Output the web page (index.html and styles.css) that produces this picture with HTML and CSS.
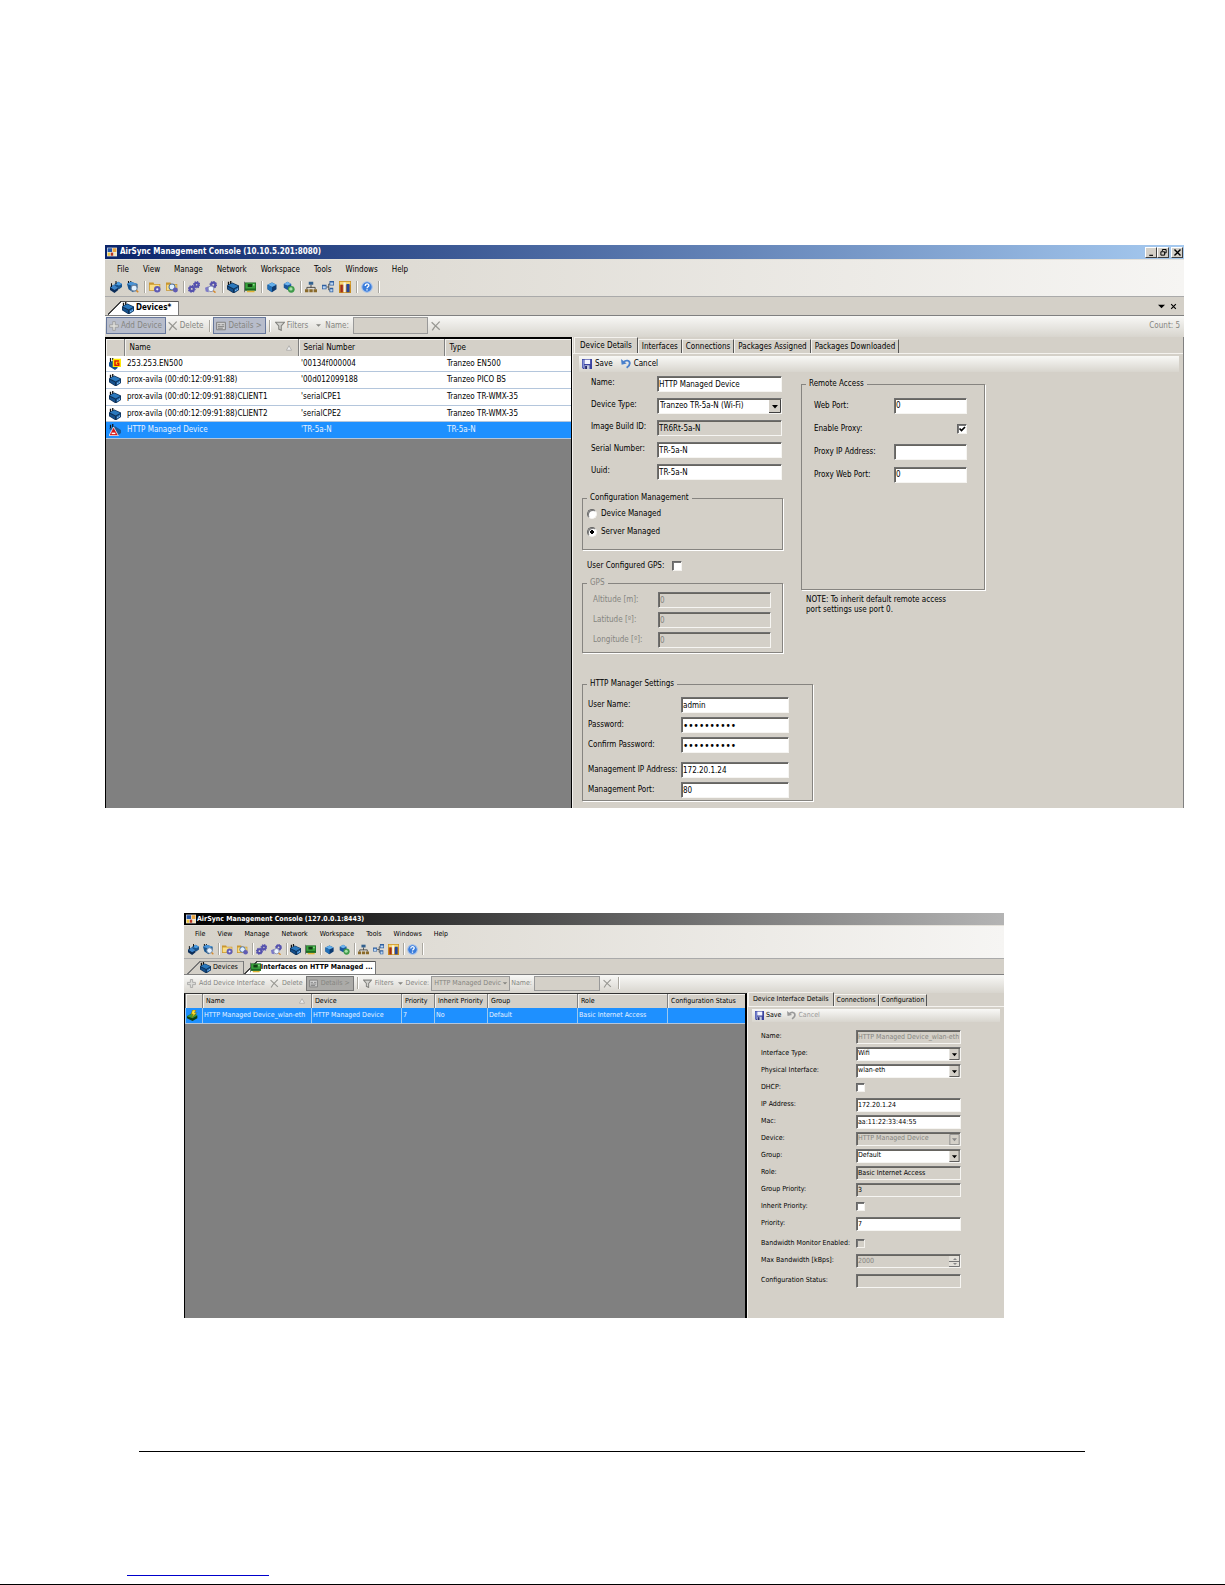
FILE: index.html
```
<!DOCTYPE html>
<html lang="en">
<head>
    <meta charset="utf-8">
    <title>AirSync Management Console</title>
    <link rel="stylesheet" href="styles.css">
</head>
<body>
    <!-- Icon set -->
    <svg class="sprite" aria-hidden="true">
        <symbol id="i-app" viewBox="0 0 16 16"><path fill="#e8e8e8" d="M0 1h16v14H0z"/><path fill="#2456a8" d="M1 2h7v6H1z"/><path fill="#e9a33c" d="M9 2h6v6H9z"/><path fill="#f1c93f" d="M1 9h4v5H1z"/><path fill="#b8341f" d="M6 9h4v5H6z"/><path fill="#f7e7b0" d="M11 9h4v5h-4z"/></symbol>
        <symbol id="i-device" viewBox="0 0 16 16"><path stroke="#111" stroke-width="1.800" d="M2 1v6M5 0v5"/><path fill="#0e3056" d="M0 6l7-4 9 4v6l-6 4H8l-8-5z"/><path fill="#2a78bd" d="M1 6l6-3 8 3.500-6 3.500z"/><path fill="#15508c" d="M1 7.500L8 11v4l-7-4.500z"/><path fill="#1e66aa" d="M10 11l5-3v4l-5 3z"/><path fill="#a6d4ff" d="M11 12l1.500-1v1.500L11 13.500zM13.300 10.500l1.200-.8v1.500l-1.200.8z"/></symbol>
        <symbol id="i-devices" viewBox="0 0 16 16"><path fill="#17548f" d="M6 4l5-3 5 3v4l-4 3-6-3z"/><path fill="#4a9be0" d="M6 4l5-3 5 3-4 2z"/><path fill="#0c2d58" d="M0 8l5-3 6 4v3l-5 4-6-4z"/><path fill="#3b83c8" d="M0 8l5-3 6 4-5 3z"/><path stroke="#111" stroke-width="1.400" d="M2 3v5M8 0v4"/></symbol>
        <symbol id="i-finddev" viewBox="0 0 16 16"><path stroke="#111" stroke-width="1.500" d="M2 0v4M5 0v3"/><path fill="#17548f" d="M0 4l5-3 9 3v5l-6 6-6-4z"/><path fill="#4a94d8" d="M0 4l5-3 9 3-6 3z"/><circle cx="9.500" cy="9.500" r="4" fill="#e4f2ff" stroke="#6d84a0" stroke-width="1.400"/><path stroke="#d58a2e" stroke-width="2" d="M12.500 12.500L15 15"/></symbol>
        <symbol id="i-folder" viewBox="0 0 16 16"><path fill="#c9962f" d="M0 2h6l1 2h8v9H0z"/><path fill="#f8dd86" d="M1 5h13v7H1z"/><circle cx="11" cy="11" r="4.300" fill="#5f5cb4"/><circle cx="11" cy="11" r="1.500" fill="#e9e9ff"/></symbol>
        <symbol id="i-findfolder" viewBox="0 0 16 16"><path fill="#c9962f" d="M0 2h6l1 2h8v9H0z"/><path fill="#f8dd86" d="M1 5h13v7H1z"/><circle cx="8" cy="8" r="4" fill="#dff0ff" stroke="#4d6f9c" stroke-width="1.400"/><circle cx="12.500" cy="12" r="3.300" fill="#5f5cb4"/></symbol>
        <symbol id="i-gears" viewBox="0 0 16 16"><g fill="none" stroke="#5552ae"><circle cx="5" cy="10.500" r="2.800" stroke-width="3"/><circle cx="11.500" cy="5" r="2.500" stroke-width="3"/><circle cx="5" cy="10.500" r="4.500" stroke-width="1.500" stroke-dasharray="1.700 1.800"/><circle cx="11.500" cy="5" r="4.200" stroke-width="1.500" stroke-dasharray="1.700 1.600"/></g></symbol>
        <symbol id="i-findgear" viewBox="0 0 16 16"><g fill="none" stroke="#5552ae"><circle cx="11" cy="5" r="2.800" stroke-width="3"/><circle cx="11" cy="5" r="4.400" stroke-width="1.400" stroke-dasharray="1.700 1.700"/></g><path fill="#7c79c8" d="M0 9l5-2v8l-4-1z"/><circle cx="8" cy="10.500" r="3.800" fill="#eef6ff" stroke="#8c93b4" stroke-width="1.300"/><path stroke="#d58a2e" stroke-width="2" d="M11 13l3 2.500"/></symbol>
        <symbol id="i-card" viewBox="0 0 16 16"><path fill="#1c6b22" d="M1 2h15v11H1z"/><path fill="#3aa33e" d="M2 3h13v7H2z"/><path fill="#123f15" d="M5 4h6v4H5z"/><path fill="#8ee08e" d="M12 4h2v2h-2z"/><path fill="#e2b437" d="M4 13h10v2H4z"/><path fill="#555" d="M0 1h1v14H0z"/></symbol>
        <symbol id="i-box" viewBox="0 0 16 16"><path fill="#0d3a70" d="M2 5l6-3 6 3v6l-6 4-6-4z"/><path fill="#63aeea" d="M2 5l6-3 6 3-6 3z"/><path fill="#2270b8" d="M2 5l6 3v7l-6-4z"/></symbol>
        <symbol id="i-boxes" viewBox="0 0 16 16"><path fill="#1a579b" d="M1 4l5-3 5 3v5l-5 3-5-3z"/><path fill="#6eb3ec" d="M1 4l5-3 5 3-5 2z"/><circle cx="11" cy="11" r="4.500" fill="#3e9a4a"/><circle cx="10.500" cy="10.500" r="2.300" fill="#a9dfa8"/></symbol>
        <symbol id="i-tree" viewBox="0 0 16 16"><path fill="none" stroke="#444" stroke-width="1.200" d="M8 5v4M2.500 11V8.500h11V11"/><path fill="#33618f" d="M5 1h6v4H5z"/><path fill="#8a6a2a" d="M0 11h4.500v4H0zM5.800 11h4.500v4H5.800zM11.500 11H16v4h-4.500z"/></symbol>
        <symbol id="i-flow" viewBox="0 0 16 16"><path fill="none" stroke="#444" stroke-width="1.200" d="M6 8h3M9 4v8M9 4h2M9 12h2"/><path fill="#2f5fa0" d="M0 5h6v6H0zM10 0h6v6h-6zM10 9h5v6h-5z"/><path fill="#bcd6f2" d="M1 7h4v3H1zM11 2h4v3h-4zM11 11h3v3h-3z"/></symbol>
        <symbol id="i-chart" viewBox="0 0 16 16"><path fill="#c98d1e" d="M0 0h16v16H0z"/><path fill="#f5d778" d="M1 1h14v4H1z"/><path fill="#a52a1f" d="M2 5h3v10H2z"/><path fill="#f4f4f4" d="M6 2h3v13H6z"/><path fill="#24459c" d="M10 4h4v11h-4z"/></symbol>
        <symbol id="i-help" viewBox="0 0 16 16"><circle cx="8" cy="8" r="7" fill="#3b7ddb" stroke="#a9c3ea" stroke-width="1.500"/><path fill="none" stroke="#fff" stroke-width="1.800" d="M5.500 6.500c0-3.500 5-3.500 5-.6 0 1.800-2.400 1.700-2.400 3.600M8 11v1.800"/></symbol>
        <symbol id="i-plus" viewBox="0 0 16 16"><path fill="#dcdcd8" stroke="#999" stroke-width="1.300" d="M6 1h4v5h5v4h-5v5H6v-5H1V6h5z"/></symbol>
        <symbol id="i-x" viewBox="0 0 16 16"><path fill="none" stroke="#979792" stroke-width="2" d="M1 2l13 12M14 1C10 5 5 9 2 15"/></symbol>
        <symbol id="i-details" viewBox="0 0 16 16"><path fill="#d2d2d2" stroke="#7d7d7d" stroke-width="1.500" d="M1 2h14v12H1z"/><path stroke="#7d7d7d" stroke-width="1.500" d="M3 6h4M3 9h10M3 11.500h8M9 6h4"/></symbol>
        <symbol id="i-filter" viewBox="0 0 16 16"><path fill="#d4d4d0" stroke="#858581" stroke-width="1.800" d="M1 2h14l-5 6v7l-4-2V8z"/></symbol>
        <symbol id="i-save" viewBox="0 0 16 16"><path fill="#3b43a0" d="M0 0h16v16H2l-2-2z"/><path fill="#8c9ce0" d="M1 1h2v13H1z"/><path fill="#f3f5ff" d="M4 1h9v7H4z"/><path fill="#c3c9dc" d="M4 10h8v6H4z"/><path fill="#23286d" d="M5 11h3v5H5z"/></symbol>
        <symbol id="i-undo" viewBox="0 0 16 16"><path fill="none" stroke="currentColor" stroke-width="3" d="M4 5c4-4 10-3 10 2 0 3-2 5-5 7"/><path fill="currentColor" d="M0 0l1 9 8-2z"/></symbol>
        <symbol id="i-en500" viewBox="0 0 16 16"><path stroke="#111" stroke-width="1.600" d="M2 0v6M5 0v3"/><path fill="#14508e" d="M0 6l6-3v6l6 4-4 3-8-5z"/><path fill="#ffe800" d="M5 1h11v11H5z"/><path fill="none" stroke="#e01b00" stroke-width="2" d="M13.500 4H8v5.500h5V7h-2.500"/></symbol>
        <symbol id="i-alert" viewBox="0 0 16 16"><path stroke="#111" stroke-width="1.600" d="M2 1v6M5 0v5"/><path fill="#1c5a96" d="M0 6l8-3 8 5v4l-5 4z"/><path fill="#d81414" stroke="#fff" stroke-width="1" d="M6 4l6.500 11.500H0z"/><path stroke="#fff" stroke-width="2" d="M3.500 12.500h5"/></symbol>
        <symbol id="i-wifi" viewBox="0 0 16 16"><path fill="#0f3f14" d="M0 9l9-5 6 4v4l-7 4-8-4z"/><path fill="#3c9a3a" d="M0 9l9-5 6 4-7 4z"/><path fill="#ffe32d" stroke="#7d6500" stroke-width=".8" d="M8 0h5l-2 4h3l-7 7 2-5H6z"/></symbol>
        <symbol id="i-down" viewBox="0 0 8 8"><path d="M0 2h8L4 6z" fill="currentColor"/></symbol>
        <symbol id="i-sort" viewBox="0 0 8 8"><path d="M4 1l3.500 6H.5z" fill="#eee" stroke="#999" stroke-width=".8"/></symbol>
        <symbol id="i-min" viewBox="0 0 12 12"><path d="M3 9h5v1.500H3z"/></symbol>
        <symbol id="i-restore" viewBox="0 0 12 12"><path fill="none" stroke="#000" stroke-width="1.300" d="M4.500 4V2h5v4.500h-2M2.500 5h5v4.500h-5z"/></symbol>
        <symbol id="i-close" viewBox="0 0 12 12"><path fill="none" stroke="currentColor" stroke-width="1.900" d="M2 2l8 8M10 2l-8 8"/></symbol>
    </svg>

    <main class="page">
        <!-- Devices window -->
        <section class="window window-devices">
            <header class="titlebar">
                <svg class="icon"><use href="#i-app"/></svg>
                <h1 class="title">AirSync Management Console (10.10.5.201:8080)</h1>
                <button class="winbtn" aria-label="Minimize"><svg><use href="#i-min"/></svg></button>
                <button class="winbtn" aria-label="Restore"><svg><use href="#i-restore"/></svg></button>
                <button class="winbtn winbtn-close" aria-label="Close"><svg><use href="#i-close"/></svg></button>
            </header>
            <div class="topbars">
                <nav class="menu">
                    <button>File</button><button>View</button><button>Manage</button><button>Network</button><button>Workspace</button><button>Tools</button><button>Windows</button><button>Help</button>
                </nav>
                <div class="iconbar">
                    <button aria-label="Devices"><svg class="icon"><use href="#i-devices"/></svg></button>
                    <button aria-label="Find device"><svg class="icon"><use href="#i-finddev"/></svg></button>
                    <i class="sep"></i>
                    <button aria-label="Packages"><svg class="icon"><use href="#i-folder"/></svg></button>
                    <button aria-label="Find package"><svg class="icon"><use href="#i-findfolder"/></svg></button>
                    <i class="sep"></i>
                    <button aria-label="Services"><svg class="icon"><use href="#i-gears"/></svg></button>
                    <button aria-label="Find service"><svg class="icon"><use href="#i-findgear"/></svg></button>
                    <i class="sep"></i>
                    <button aria-label="Device"><svg class="icon"><use href="#i-device"/></svg></button>
                    <button aria-label="Interface"><svg class="icon"><use href="#i-card"/></svg></button>
                    <i class="sep"></i>
                    <button aria-label="Package"><svg class="icon"><use href="#i-box"/></svg></button>
                    <button aria-label="Deploy"><svg class="icon"><use href="#i-boxes"/></svg></button>
                    <i class="sep"></i>
                    <button aria-label="Topology"><svg class="icon"><use href="#i-tree"/></svg></button>
                    <button aria-label="Connections"><svg class="icon"><use href="#i-flow"/></svg></button>
                    <button aria-label="Reports"><svg class="icon"><use href="#i-chart"/></svg></button>
                    <i class="sep"></i>
                    <button aria-label="Help"><svg class="icon"><use href="#i-help"/></svg></button>
                    <i class="sep"></i>
                </div>
            </div>
            <div class="doctabs">
                <button class="doctab active"><svg class="icon"><use href="#i-device"/></svg>Devices*</button>
                <span class="spacer"></span>
                <button class="tabctl" aria-label="Tab list"><svg><use href="#i-down"/></svg></button>
                <button class="tabctl" aria-label="Close tab"><svg><use href="#i-close"/></svg></button>
            </div>
            <div class="toolbar">
                <button class="tool pressed"><svg class="icon"><use href="#i-plus"/></svg>Add Device</button>
                <button class="tool"><svg class="icon"><use href="#i-x"/></svg>Delete</button>
                <i class="sep"></i>
                <button class="tool pressed"><svg class="icon"><use href="#i-details"/></svg>Details &gt;</button>
                <i class="sep"></i>
                <button class="tool"><svg class="icon"><use href="#i-filter"/></svg>Filters</button>
                <svg class="drop"><use href="#i-down"/></svg>
                <label for="filter-name">Name:</label>
                <input class="filter" id="filter-name" type="text" disabled>
                <button class="tool" aria-label="Clear"><svg class="icon"><use href="#i-x"/></svg></button>
                <span class="spacer"></span>
                <span class="count">Count: 5</span>
            </div>
            <div class="panes">
                <div class="listpane">
                    <table class="grid">
                        <colgroup><col class="c-icon"><col class="c-name"><col class="c-serial"><col></colgroup>
                        <thead>
                            <tr><th></th><th><span class="sorted">Name <svg><use href="#i-sort"/></svg></span></th><th>Serial Number</th><th>Type</th></tr>
                        </thead>
                        <tbody>
                            <tr><td><svg class="icon"><use href="#i-en500"/></svg></td><td>253.253.EN500</td><td>'00134f000004</td><td>Tranzeo EN500</td></tr>
                            <tr><td><svg class="icon"><use href="#i-device"/></svg></td><td>prox-avila (00:d0:12:09:91:88)</td><td>'00d012099188</td><td>Tranzeo PICO BS</td></tr>
                            <tr><td><svg class="icon"><use href="#i-device"/></svg></td><td>prox-avila (00:d0:12:09:91:88)CLIENT1</td><td>'serialCPE1</td><td>Tranzeo TR-WMX-35</td></tr>
                            <tr><td><svg class="icon"><use href="#i-device"/></svg></td><td>prox-avila (00:d0:12:09:91:88)CLIENT2</td><td>'serialCPE2</td><td>Tranzeo TR-WMX-35</td></tr>
                            <tr class="selected"><td><svg class="icon"><use href="#i-alert"/></svg></td><td>HTTP Managed Device</td><td>'TR-5a-N</td><td>TR-5a-N</td></tr>
                        </tbody>
                    </table>
                </div>
                <div class="detailpane">
                    <div class="tabs">
                        <button class="tab active">Device Details</button><button class="tab">Interfaces</button><button class="tab">Connections</button><button class="tab">Packages Assigned</button><button class="tab">Packages Downloaded</button>
                    </div>
                    <div class="savebar">
                        <button><svg class="icon"><use href="#i-save"/></svg>Save</button>
                        <button><svg class="icon undo"><use href="#i-undo"/></svg>Cancel</button>
                    </div>
                    <form class="details">
                        <div class="col-left">
                            <div class="fields main-fields">
                                <label for="d-name">Name:</label>
                                <input class="box" id="d-name" type="text" value="HTTP Managed Device">
                                <label for="d-type">Device Type:</label>
                                <select class="box" id="d-type"><option>Tranzeo TR-5a-N (Wi-Fi)</option></select>
                                <label for="d-image">Image Build ID:</label>
                                <input class="box readonly" id="d-image" type="text" value="TR6Rt-5a-N" readonly>
                                <label for="d-serial">Serial Number:</label>
                                <input class="box" id="d-serial" type="text" value="TR-5a-N">
                                <label for="d-uuid">Uuid:</label>
                                <input class="box" id="d-uuid" type="text" value="TR-5a-N">
                            </div>
                            <fieldset class="group config">
                                <legend>Configuration Management</legend>
                                <label class="choice"><input type="radio" name="managed">Device Managed</label>
                                <label class="choice"><input type="radio" name="managed" checked>Server Managed</label>
                            </fieldset>
                            <div class="gps-toggle">
                                <label for="d-gps">User Configured GPS:</label>
                                <input id="d-gps" type="checkbox">
                            </div>
                            <fieldset class="group gps" disabled>
                                <legend>GPS</legend>
                                <div class="fields">
                                    <label for="g-alt">Altitude [m]:</label>
                                    <input class="box" id="g-alt" type="text" value="0">
                                    <label for="g-lat">Latitude [º]:</label>
                                    <input class="box" id="g-lat" type="text" value="0">
                                    <label for="g-lon">Longitude [º]:</label>
                                    <input class="box" id="g-lon" type="text" value="0">
                                </div>
                            </fieldset>
                        </div>
                        <div class="col-right">
                            <fieldset class="group remote">
                                <legend>Remote Access</legend>
                                <div class="fields">
                                    <label for="r-web">Web Port:</label>
                                    <input class="box" id="r-web" type="text" value="0">
                                    <label for="r-proxy">Enable Proxy:</label>
                                    <input class="right" id="r-proxy" type="checkbox" checked>
                                    <label for="r-ip">Proxy IP Address:</label>
                                    <input class="box" id="r-ip" type="text">
                                    <label for="r-port">Proxy Web Port:</label>
                                    <input class="box" id="r-port" type="text" value="0">
                                </div>
                            </fieldset>
                            <p class="note">NOTE: To inherit default remote access port settings use port 0.</p>
                        </div>
                        <fieldset class="group http">
                            <legend>HTTP Manager Settings</legend>
                            <div class="fields">
                                <label for="h-user">User Name:</label>
                                <input class="box" id="h-user" type="text" value="admin">
                                <label for="h-pass">Password:</label>
                                <input class="box" id="h-pass" type="password" value="0123456789">
                                <label for="h-confirm">Confirm Password:</label>
                                <input class="box" id="h-confirm" type="password" value="0123456789">
                            </div>
                            <div class="fields">
                                <label for="h-ip">Management IP Address:</label>
                                <input class="box" id="h-ip" type="text" value="172.20.1.24">
                                <label for="h-port">Management Port:</label>
                                <input class="box" id="h-port" type="text" value="80">
                            </div>
                        </fieldset>
                    </form>
                </div>
            </div>
        </section>

        <!-- Interfaces window -->
        <section class="window window-interfaces">
            <header class="titlebar">
                <svg class="icon"><use href="#i-app"/></svg>
                <h1 class="title">AirSync Management Console (127.0.0.1:8443)</h1>
            </header>
            <div class="topbars">
                <nav class="menu">
                    <button>File</button><button>View</button><button>Manage</button><button>Network</button><button>Workspace</button><button>Tools</button><button>Windows</button><button>Help</button>
                </nav>
                <div class="iconbar">
                    <button aria-label="Devices"><svg class="icon"><use href="#i-devices"/></svg></button>
                    <button aria-label="Find device"><svg class="icon"><use href="#i-finddev"/></svg></button>
                    <i class="sep"></i>
                    <button aria-label="Packages"><svg class="icon"><use href="#i-folder"/></svg></button>
                    <button aria-label="Find package"><svg class="icon"><use href="#i-findfolder"/></svg></button>
                    <i class="sep"></i>
                    <button aria-label="Services"><svg class="icon"><use href="#i-gears"/></svg></button>
                    <button aria-label="Find service"><svg class="icon"><use href="#i-findgear"/></svg></button>
                    <i class="sep"></i>
                    <button aria-label="Device"><svg class="icon"><use href="#i-device"/></svg></button>
                    <button aria-label="Interface"><svg class="icon"><use href="#i-card"/></svg></button>
                    <i class="sep"></i>
                    <button aria-label="Package"><svg class="icon"><use href="#i-box"/></svg></button>
                    <button aria-label="Deploy"><svg class="icon"><use href="#i-boxes"/></svg></button>
                    <i class="sep"></i>
                    <button aria-label="Topology"><svg class="icon"><use href="#i-tree"/></svg></button>
                    <button aria-label="Connections"><svg class="icon"><use href="#i-flow"/></svg></button>
                    <button aria-label="Reports"><svg class="icon"><use href="#i-chart"/></svg></button>
                    <i class="sep"></i>
                    <button aria-label="Help"><svg class="icon"><use href="#i-help"/></svg></button>
                    <i class="sep"></i>
                </div>
            </div>
            <div class="doctabs">
                <button class="doctab"><svg class="icon"><use href="#i-device"/></svg>Devices</button>
                <button class="doctab active"><svg class="icon"><use href="#i-card"/></svg>Interfaces on HTTP Managed ...</button>
            </div>
            <div class="toolbar">
                <button class="tool"><svg class="icon"><use href="#i-plus"/></svg>Add Device Interface</button>
                <button class="tool"><svg class="icon"><use href="#i-x"/></svg>Delete</button>
                <button class="tool pressed"><svg class="icon"><use href="#i-details"/></svg>Details &gt;</button>
                <i class="sep"></i>
                <button class="tool"><svg class="icon"><use href="#i-filter"/></svg>Filters</button>
                <svg class="drop"><use href="#i-down"/></svg>
                <label for="filter-device">Device:</label>
                <select class="filter" id="filter-device" disabled><option>HTTP Managed Devic</option></select>
                <label for="filter-if">Name:</label>
                <input class="filter" id="filter-if" type="text" disabled>
                <button class="tool" aria-label="Clear"><svg class="icon"><use href="#i-x"/></svg></button>
                <i class="sep"></i>
            </div>
            <div class="panes">
                <div class="listpane">
                    <table class="grid">
                        <colgroup><col class="c-icon"><col class="c-name"><col class="c-device"><col class="c-prio"><col class="c-inherit"><col class="c-group"><col class="c-role"><col></colgroup>
                        <thead>
                            <tr><th></th><th><span class="sorted">Name <svg><use href="#i-sort"/></svg></span></th><th>Device</th><th>Priority</th><th>Inherit Priority</th><th>Group</th><th>Role</th><th>Configuration Status</th></tr>
                        </thead>
                        <tbody>
                            <tr class="selected"><td><svg class="icon"><use href="#i-wifi"/></svg></td><td>HTTP Managed Device_wlan-eth</td><td>HTTP Managed Device</td><td>7</td><td>No</td><td>Default</td><td>Basic Internet Access</td><td></td></tr>
                        </tbody>
                    </table>
                </div>
                <div class="detailpane">
                    <div class="tabs">
                        <button class="tab active">Device Interface Details</button><button class="tab">Connections</button><button class="tab">Configuration</button>
                    </div>
                    <div class="savebar">
                        <button><svg class="icon"><use href="#i-save"/></svg>Save</button>
                        <button disabled><svg class="icon undo"><use href="#i-undo"/></svg>Cancel</button>
                    </div>
                    <form class="iface">
                        <div class="fields">
                            <label for="i-name">Name:</label>
                            <input class="box" id="i-name" type="text" value="HTTP Managed Device_wlan-eth" disabled>
                            <label for="i-type">Interface Type:</label>
                            <select class="box" id="i-type"><option>Wifi</option></select>
                            <label for="i-phys">Physical Interface:</label>
                            <select class="box" id="i-phys"><option>wlan-eth</option></select>
                            <label for="i-dhcp">DHCP:</label>
                            <input id="i-dhcp" type="checkbox">
                            <label for="i-ip">IP Address:</label>
                            <input class="box" id="i-ip" type="text" value="172.20.1.24">
                            <label for="i-mac">Mac:</label>
                            <input class="box" id="i-mac" type="text" value="aa:11:22:33:44:55">
                            <label for="i-dev">Device:</label>
                            <select class="box" id="i-dev" disabled><option>HTTP Managed Device</option></select>
                            <label for="i-group">Group:</label>
                            <select class="box" id="i-group"><option>Default</option></select>
                            <label for="i-role">Role:</label>
                            <input class="box readonly" id="i-role" type="text" value="Basic Internet Access" readonly>
                            <label for="i-gprio">Group Priority:</label>
                            <input class="box readonly" id="i-gprio" type="text" value="3" readonly>
                            <label for="i-inherit">Inherit Priority:</label>
                            <input id="i-inherit" type="checkbox">
                            <label for="i-prio">Priority:</label>
                            <input class="box" id="i-prio" type="text" value="7">
                        </div>
                        <div class="fields">
                            <label for="i-bw">Bandwidth Monitor Enabled:</label>
                            <input id="i-bw" type="checkbox" disabled>
                            <label for="i-max">Max Bandwidth [kBps]:</label>
                            <input class="box spin" id="i-max" type="text" value="2000" disabled>
                        </div>
                        <div class="fields">
                            <label for="i-status">Configuration Status:</label>
                            <input class="box readonly" id="i-status" type="text" readonly>
                        </div>
                    </form>
                </div>
            </div>
        </section>

        <!-- Page footer -->
        <hr class="rule">
        <hr class="link-line">
        <hr class="page-end">
    </main>
</body>
</html>
```
FILE: styles.css
```
* { box-sizing: border-box; }
body { margin: 0; background: #fff; color: #000; }
.sprite { display: none; }
.page { padding-top: 245px; }
.window {
    --face: #d4d0c8;
    --dim: #858580;
    --icon: 12px;
    background: var(--face);
    font-family: "DejaVu Sans Condensed", "DejaVu Sans", sans-serif;
    font-size: 8px;
    line-height: 10px;
}
.window-devices { margin: 0 41px 105px 105px; }
.window-interfaces { --icon: 11px; margin: 0 221px 0 184px; font-size: 7px; line-height: 9px; }
.window svg { display: block; flex: none; }
.icon { width: var(--icon); height: var(--icon); }
.spacer { flex: 1; }

button, input, select { font: inherit; color: inherit; margin: 0; }
button { background: none; border: 0; padding: 0; white-space: nowrap; display: flex; align-items: center; }

/* title bar */
.titlebar { display: flex; align-items: center; height: 15px; padding: 0 1px 0 2px; border-bottom: 1px solid #e4e1da; background: linear-gradient(90deg, #0a246a, #a6caf0); color: #fff; }
.titlebar .icon { width: 10px; height: 10px; }
.title { flex: 1; margin: 0 0 0 3px; font-size: inherit; font-weight: bold; }
.winbtn { justify-content: center; width: 12px; height: 11px; background: var(--face); color: #000; border: 1px solid; border-color: #fff #404040 #404040 #fff; }
.winbtn-close { margin-left: 2px; }
.winbtn svg { width: 9px; height: 9px; }
.window-interfaces .titlebar { height: 13px; background: linear-gradient(90deg, #000, #202020 20%, #808080 70%, #b4b4b4); }
.window-interfaces .title { margin-left: 1px; }

/* menu and icon bar */
.topbars { background: linear-gradient(90deg, #d6d2c9, #f6f5f3); border-bottom: 1px solid #aaa; }
.menu { display: flex; gap: 14px; height: 20px; padding-left: 12px; }
.iconbar { display: flex; align-items: center; gap: 5px; height: 16px; padding: 0 5px 2px; }
.iconbar .sep { margin-right: -1px; }
.sep { width: 1px; height: 12px; background: #aaa79f; box-shadow: 1px 0 0 #fff; }
.window-interfaces .menu { gap: 12px; height: 16px; padding-left: 11px; }
.window-interfaces .iconbar { gap: 4px; padding-left: 4px; }

/* document tabs */
.doctabs { display: flex; align-items: flex-end; height: 19px; padding: 0 7px 0 3px; border-bottom: 1px solid #808080; }
.doctab { height: 14px; padding: 0 7px 0 14px; gap: 2px; border-right: 1px solid #777; background: linear-gradient(#888, #888) 14px 0 / 100% 1px no-repeat, linear-gradient(135deg, transparent 9px, #777 9px, #777 10px, transparent 10px); }
.doctab.active { font-weight: bold; background: linear-gradient(#555, #555) 14px 0 / 100% 1px no-repeat, linear-gradient(135deg, transparent 9px, #444 9px, #444 10px, #fff 10px); }
.tabctl { align-self: center; margin-left: 5px; }
.tabctl svg { width: 7px; height: 7px; }
.window-interfaces .doctabs { height: 16px; }
.window-interfaces .doctab { height: 13px; padding: 0 5px 0 13px; }
.window-interfaces .doctab.active { padding: 0 2px 0 6px; gap: 0; }

/* tool bar */
.toolbar { display: flex; align-items: center; height: 21px; padding: 0 4px 2px 1px; color: var(--dim); background: linear-gradient(#f8f8f6, #d8d5ce); }
.tool { height: 17px; padding: 0 3px 0 2px; gap: 2px; }
.toolbar .icon { width: 10px; height: 10px; }
.tool.pressed { background: #b8bdcb; border: 1px solid #66779c; }
.toolbar .sep { margin: 0 3px; }
.drop { width: 5px; height: 5px; margin: 0 4px 0 5px; }
.filter { width: 75px; height: 17px; margin: 0 1px 0 4px; padding: 0 2px; border: 1px solid #999; background: var(--face); border-radius: 0; color: var(--dim); opacity: 1; }
.window-interfaces .toolbar { height: 18px; }
.window-interfaces .toolbar .icon { width: 9px; height: 9px; }
.window-interfaces .tool { height: 15px; gap: 3px; }
.window-interfaces .tool.pressed { background: #acaba8; border-color: #777; }
.window-interfaces .drop { margin: 0 3px 0 1px; }
.window-interfaces .filter { width: 66px; height: 15px; margin-left: 2px; }
.window-interfaces select.filter { width: 79px; }

/* split panes */
.panes { display: grid; grid-template-columns: 467fr 612fr; }
.window-interfaces .panes { grid-template-columns: 563fr 257fr; }
.listpane { background: #808080; border: solid #000; border-width: 2px 1px 0; min-width: 0; }
.grid { width: 100%; height: 100px; border-collapse: collapse; table-layout: fixed; }
.grid th { height: 17px; padding: 0 0 0 5px; font-weight: normal; text-align: left; background: var(--face); border-left: 1px solid #808080; box-shadow: inset 1px 1px 0 #f4f2ee; }
.grid th:first-child { border-left: 0; }
.grid td { padding: 0 0 0 3px; background: #fff; border-bottom: 1px solid #b4c6dc; white-space: nowrap; overflow: hidden; }
.grid td:first-child { padding-left: 3px; }
.grid .selected td { background: #1e90ff; color: #e6f2ff; }
.sorted { display: flex; justify-content: space-between; align-items: center; padding-right: 6px; }
.sorted svg { width: 6px; height: 6px; }
.c-icon { width: 18px; }
.c-name { width: 174px; }
.c-serial { width: 146px; }
.window-interfaces .listpane { border-color: #333 #000; border-width: 1px 2px 0 1px; }
.window-interfaces .grid { height: 30px; }
.window-interfaces .grid th { height: 14px; padding-left: 3px; white-space: nowrap; }
.window-interfaces .grid td { padding-left: 1px; border-left: 1px solid #9cc8ee; }
.window-interfaces .c-icon { width: 17px; }
.window-interfaces .c-name { width: 109px; }
.c-device { width: 90px; }
.c-prio { width: 33px; }
.c-inherit { width: 53px; }
.c-group, .c-role { width: 90px; }

/* detail tabs */
.detailpane { border-left: 1px solid #f4f2ee; border-right: 1px solid #808080; min-width: 0; }
.window-interfaces .detailpane { border-right: 0; }
.tabs { display: flex; align-items: flex-end; height: 17px; padding-left: 1px; border-bottom: 1px solid #f4f2ee; }
.tab { height: 14px; padding: 0 3px; border: solid; border-width: 1px 1px 0; border-color: #f4f2ee #555 #555 #f4f2ee; }
.tab.active { height: 16px; padding: 0 5px; }
.window-interfaces .tabs { height: 14px; padding-left: 0; }
.window-interfaces .tab { height: 12px; padding: 0 2px; }
.window-interfaces .tab.active { height: 14px; padding: 0 4px; }
.savebar { display: flex; align-items: center; gap: 8px; height: 16px; margin: 2px 4px 0 6px; padding-left: 3px; background: linear-gradient(#f8f8f6, #d8d5ce); }
.savebar button { gap: 3px; }
.savebar .icon { width: 10px; height: 10px; }
.undo { color: #4a80cc; }
.savebar button:disabled, .savebar button:disabled .undo { color: #999; }
.window-interfaces .savebar { height: 13px; gap: 6px; margin-left: 4px; }
.window-interfaces .savebar button { gap: 2px; }
.window-interfaces .savebar .icon { width: 9px; height: 9px; }

/* form controls */
.fields { display: grid; align-items: center; }
.box { width: 100%; height: 16px; padding: 0 1px; background-color: #fff; border: 1px solid; border-color: #707070 #f6f5f2 #f6f5f2 #707070; border-radius: 0; box-shadow: inset 1px 1px 0 #66645f; outline: 0; }
input[type="password"] { font-size: 10px; }
select { appearance: none; }
select.box { padding: 0 2px; background-image: url("data:image/svg+xml,%3Csvg xmlns='http://www.w3.org/2000/svg' viewBox='0 0 12 13'%3E%3Cpath fill='%23d4d0c8' d='M0 0h12v13H0z'/%3E%3Cpath fill='none' stroke='%23404040' d='M11.500 0v12.500H0'/%3E%3Cpath d='M3 5h6L6 8.500z'/%3E%3C/svg%3E"); background-repeat: no-repeat; background-position: right 0 top 1px; background-size: 12px 13px; }
select.filter { background-image: url("data:image/svg+xml,%3Csvg xmlns='http://www.w3.org/2000/svg' viewBox='0 0 8 8'%3E%3Cpath fill='%23858580' d='M1 3h6L4 6z'/%3E%3C/svg%3E"); background-repeat: no-repeat; background-position: right 1px center; background-size: 6px 6px; }
.box.readonly, .box:disabled { background-color: var(--face); }
.box:disabled { color: var(--dim); opacity: 1; }
input[type="checkbox"], input[type="radio"] { appearance: none; width: 10px; height: 10px; background: #fff; border: 1px solid; border-color: #666 #f4f2ee #f4f2ee #666; box-shadow: inset 1px 1px 0 #777; }
input[type="checkbox"]:checked { background: #fff url("data:image/svg+xml,%3Csvg xmlns='http://www.w3.org/2000/svg' viewBox='0 0 8 8'%3E%3Cpath fill='none' stroke='%23000' stroke-width='1.700' d='M1.500 3.500l2 2 3.500-3.500'/%3E%3C/svg%3E"); }
input[type="checkbox"]:disabled { background: var(--face); }
input[type="radio"] { border-radius: 50%; }
input[type="radio"]:checked { background: radial-gradient(circle, #000 2px, #fff 2px); }
.window-interfaces input[type="checkbox"] { width: 9px; height: 9px; }
.window-interfaces .box { height: 14px; }
.window-interfaces select.box { padding-left: 1px; background-size: 11px 11px; }
.window-interfaces select.box:disabled { background-image: url("data:image/svg+xml,%3Csvg xmlns='http://www.w3.org/2000/svg' viewBox='0 0 12 13'%3E%3Cpath fill='none' stroke='%23888' d='M.5 12.500V.5h11v12H0'/%3E%3Cpath fill='%23888' d='M3 5h6L6 8.500z'/%3E%3C/svg%3E"); }
.spin { background-image: url("data:image/svg+xml,%3Csvg xmlns='http://www.w3.org/2000/svg' viewBox='0 0 11 11'%3E%3Cpath fill='%23e4e1da' d='M0 0h11v11H0z'/%3E%3Cpath fill='none' stroke='%23777' d='M10.500 0v10.500H0M0 5.500h11'/%3E%3Cpath fill='%23888' d='M4 4h4L6 2zM4 7h4L6 9z'/%3E%3C/svg%3E"); background-repeat: no-repeat; background-position: right 0 top 1px; background-size: 11px 11px; }
.group { margin: 0; padding: 0; min-width: 0; border: 1px solid #868480; box-shadow: 1px 1px 0 #fff; }
.group legend { margin-left: 4px; padding: 0 3px; background: var(--face); }

/* device form */
.details { display: grid; grid-template-columns: 219px 184px; padding: 4px 0 7px 9px; }
.main-fields { grid-template-columns: 66px 125px; grid-auto-rows: 22px; padding-left: 9px; align-items: start; }
.main-fields label { padding-top: 2px; }
.config { width: 201px; margin-top: 7px; padding: 2px 0 8px; }
.choice { display: flex; align-items: center; gap: 4px; height: 18px; padding-left: 4px; }
.gps-toggle { display: flex; align-items: center; gap: 8px; height: 12px; margin: 10px 0 6px 5px; }
.gps { width: 201px; padding: 4px 0 0; }
.gps label, .gps legend { color: var(--dim); }
.gps .fields { grid-template-columns: 65px 113px; grid-auto-rows: 20px; align-items: start; padding-left: 10px; }
.gps label { padding-top: 3px; }
.remote { min-height: 211px; margin-top: 3px; padding-top: 8px; }
.remote .fields { grid-template-columns: 80px 73px; grid-auto-rows: 17px; row-gap: 6px; padding-left: 12px; }
.right { justify-self: end; }
.note { width: 150px; margin: 5px 0 0 5px; }
.http { grid-column: 1 / -1; width: 231px; margin-top: 26px; padding-top: 6px; }
.http .fields { grid-template-columns: 93px 108px; grid-auto-rows: 20px; padding-left: 5px; }
.http .fields + .fields { margin-top: 5px; }

/* interface form */
.iface { padding: 6px 0 29px 13px; }
.iface .fields { grid-template-columns: 95px 105px; grid-auto-rows: 17px; }
.iface .fields + .fields { margin-top: 3px; }

/* page footer lines */
.rule, .link-line, .page-end { border: 0; height: 1px; }
.rule { margin: 133px 140px 0 139px; background: #000; }
.link-line { width: 142px; margin: 123px 0 0 127px; background: #00c; }
.page-end { margin: 8px 0 0; background: #000; }
```
